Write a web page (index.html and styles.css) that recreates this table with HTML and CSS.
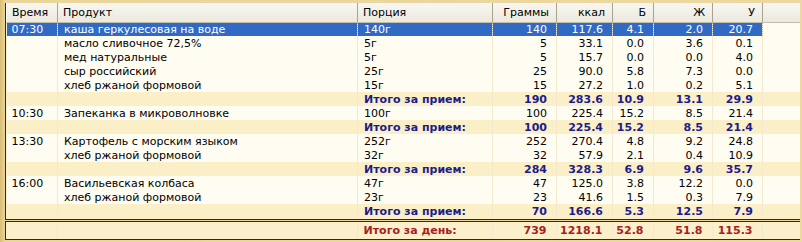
FILE: index.html
```html
<!DOCTYPE html>
<html lang="ru">
<head>
<meta charset="utf-8">
<title>Дневник питания</title>
<link rel="stylesheet" href="styles.css">
</head>
<body>
<div class="frame">
  <div class="grid-box">
    <table class="grid">
      <colgroup>
        <col class="c-time"><col class="c-prod"><col class="c-port"><col class="c-gr"><col class="c-kcal"><col class="c-b"><col class="c-zh"><col class="c-u"><col class="c-rest">
      </colgroup>
      <thead>
        <tr>
          <th>Время</th><th>Продукт</th><th>Порция</th><th class="num">Граммы</th><th class="num">ккал</th><th class="num">Б</th><th class="num">Ж</th><th class="num">У</th><th></th>
        </tr>
      </thead>
      <tbody>
        <tr class="sel"><td>07:30</td><td>каша геркулесовая на воде</td><td>140г</td><td class="num">140</td><td class="num">117.6</td><td class="num">4.1</td><td class="num">2.0</td><td class="num">20.7</td><td class="rest"></td></tr>
        <tr><td></td><td>масло сливочное 72,5%</td><td>5г</td><td class="num">5</td><td class="num">33.1</td><td class="num">0.0</td><td class="num">3.6</td><td class="num">0.1</td><td></td></tr>
        <tr><td></td><td>мед натуральные</td><td>5г</td><td class="num">5</td><td class="num">15.7</td><td class="num">0.0</td><td class="num">0.0</td><td class="num">4.0</td><td></td></tr>
        <tr><td></td><td>сыр российский</td><td>25г</td><td class="num">25</td><td class="num">90.0</td><td class="num">5.8</td><td class="num">7.3</td><td class="num">0.0</td><td></td></tr>
        <tr><td></td><td>хлеб ржаной формовой</td><td>15г</td><td class="num">15</td><td class="num">27.2</td><td class="num">1.0</td><td class="num">0.2</td><td class="num">5.1</td><td></td></tr>
        <tr class="sum"><td></td><td></td><td>Итого за прием:</td><td class="num">190</td><td class="num">283.6</td><td class="num">10.9</td><td class="num">13.1</td><td class="num">29.9</td><td></td></tr>
        <tr><td>10:30</td><td>Запеканка в микроволновке</td><td>100г</td><td class="num">100</td><td class="num">225.4</td><td class="num">15.2</td><td class="num">8.5</td><td class="num">21.4</td><td></td></tr>
        <tr class="sum"><td></td><td></td><td>Итого за прием:</td><td class="num">100</td><td class="num">225.4</td><td class="num">15.2</td><td class="num">8.5</td><td class="num">21.4</td><td></td></tr>
        <tr><td>13:30</td><td>Картофель с морским языком</td><td>252г</td><td class="num">252</td><td class="num">270.4</td><td class="num">4.8</td><td class="num">9.2</td><td class="num">24.8</td><td></td></tr>
        <tr><td></td><td>хлеб ржаной формовой</td><td>32г</td><td class="num">32</td><td class="num">57.9</td><td class="num">2.1</td><td class="num">0.4</td><td class="num">10.9</td><td></td></tr>
        <tr class="sum"><td></td><td></td><td>Итого за прием:</td><td class="num">284</td><td class="num">328.3</td><td class="num">6.9</td><td class="num">9.6</td><td class="num">35.7</td><td></td></tr>
        <tr><td>16:00</td><td>Васильевская колбаса</td><td>47г</td><td class="num">47</td><td class="num">125.0</td><td class="num">3.8</td><td class="num">12.2</td><td class="num">0.0</td><td></td></tr>
        <tr><td></td><td>хлеб ржаной формовой</td><td>23г</td><td class="num">23</td><td class="num">41.6</td><td class="num">1.5</td><td class="num">0.3</td><td class="num">7.9</td><td></td></tr>
        <tr class="sum"><td></td><td></td><td>Итого за прием:</td><td class="num">70</td><td class="num">166.6</td><td class="num">5.3</td><td class="num">12.5</td><td class="num">7.9</td><td></td></tr>
      </tbody>
    </table>
  </div>
  <div class="day-box">
    <table class="grid">
      <colgroup>
        <col class="c-time"><col class="c-prod"><col class="c-port"><col class="c-gr"><col class="c-kcal"><col class="c-b"><col class="c-zh"><col class="c-u"><col class="c-rest">
      </colgroup>
      <tbody>
        <tr class="day"><td></td><td></td><td>Итого за день:</td><td class="num">739</td><td class="num">1218.1</td><td class="num">52.8</td><td class="num">51.8</td><td class="num">115.3</td><td></td></tr>
      </tbody>
    </table>
  </div>
</div>
</body>
</html>
```
FILE: styles.css
```css
html, body {
  margin: 0;
  padding: 0;
}
body {
  width: 802px;
  height: 242px;
  overflow: hidden;
  background: linear-gradient(90deg, #d8bd73 0px, #ead59b 5px, #ecd8a0 100%);
  font-family: "DejaVu Sans", Verdana, sans-serif;
  font-size: 11px;
  color: #000;
}
.frame {
  display: flex;
  flex-direction: column;
  gap: 1px;
  padding: 3px 2px 0 5px;
}
.grid-box {
  height: 216px;
  border-left: 1px solid #2b2b2b;
  border-bottom: 1px solid #2b2b2b;
  background: #fbf0cb;
  overflow: hidden;
}
.day-box {
  height: 17px;
  border: 1px solid #2b2b2b;
  border-right: none;
  background: #fbf0cb;
  overflow: hidden;
}
.grid {
  width: 794px;
  border-collapse: collapse;
  table-layout: fixed;
}
.c-time { width: 51px; }
.c-prod { width: 300px; }
.c-port { width: 135px; }
.c-gr { width: 64px; }
.c-kcal { width: 56px; }
.c-b { width: 41px; }
.c-zh { width: 59px; }
.c-u { width: 50px; }
.c-rest { width: 38px; }
.grid th {
  height: 19px;
  padding: 0 0 0 5px;
  text-align: left;
  font-weight: normal;
  background: linear-gradient(#f8f7f2, #ebe8dc);
  border-right: 1px solid #a8a493;
  border-left: 1px solid #fff;
  border-bottom: 1px solid #c2bead;
  white-space: nowrap;
  box-sizing: border-box;
}
.grid th:last-child {
  border-right: none;
}
.grid th.num {
  text-align: right;
  padding: 0 7px 0 0;
}
.grid td {
  height: 14px;
  padding: 0 0 0 6px;
  line-height: 13px;
  white-space: nowrap;
  background: #fffcf1;
  border-right: 1px solid #f2e9cf;
  box-sizing: border-box;
  overflow: hidden;
}
.grid td.num {
  text-align: right;
  padding: 0 9px 0 0;
}
.grid td:first-child {
  padding-left: 5px;
}
.grid tr.sel td {
  background: #316ac5;
  color: #fff;
  border-right: 1px dotted #8fb0e6;
}
.grid tr.sel td.rest {
  background: #fffcf1;
  color: #000;
  border-right: none;
}
.grid tr.sum td {
  background: #fbefc8;
  color: #1c1c8c;
  font-weight: bold;
}
.grid tr.day td {
  height: 17px;
  background: #fbf0cb;
  color: #a52222;
  font-weight: bold;
}
```
